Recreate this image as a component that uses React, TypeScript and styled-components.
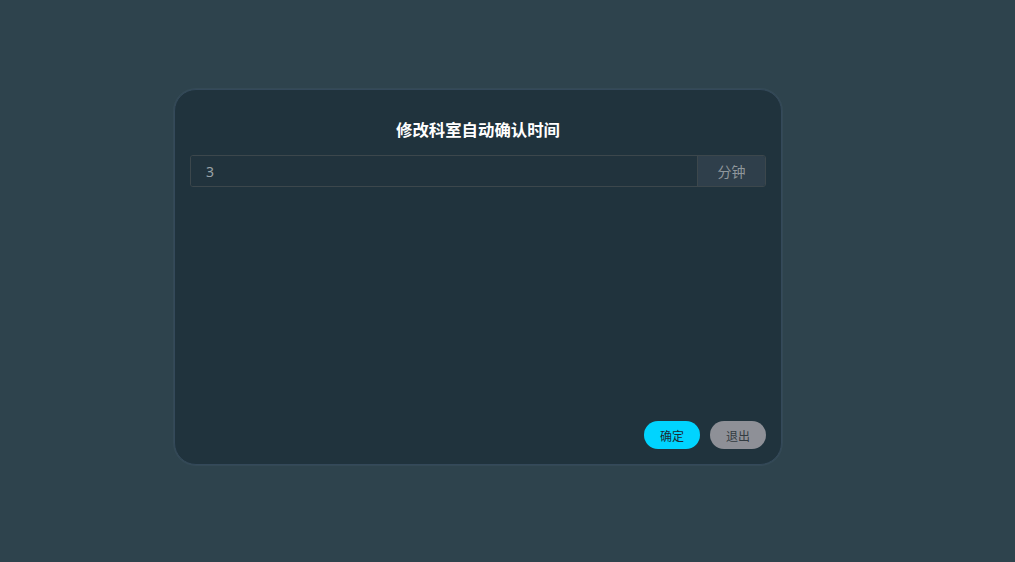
import React from "react";
import styled, { createGlobalStyle } from "styled-components";

const Global = createGlobalStyle`
  html, body { margin: 0; padding: 0; }
  body {
    width: 1015px;
    height: 562px;
    background: #2e434d;
    font-family: "Noto Sans CJK SC", "Noto Sans", sans-serif;
    overflow: hidden;
  }
`;

const Page = styled.div`
  width: 1015px;
  height: 562px;
  display: flex;
  justify-content: flex-start;
  align-items: flex-start;
  padding: 89px 0 0 174px;
  box-sizing: border-box;
`;

const Modal = styled.div`
  width: 608px;
  height: 376px;
  box-sizing: border-box;
  background: #20333d;
  border: 1px solid #34495a;
  box-shadow: 0 0 0 1px rgba(60, 82, 96, 0.45);
  border-radius: 22px;
  padding: 21px 15px 15px 15px;
  display: flex;
  flex-direction: column;
`;

const Title = styled.h3`
  margin: 0;
  height: 36px;
  line-height: 36px;
  text-align: center;
  color: #ffffff;
  font-size: 16.4px;
  font-weight: 700;
`;

const InputRow = styled.div`
  margin-top: 8px;
  display: flex;
  height: 32px;
  border: 1px solid #3c474c;
  border-radius: 3px;
  box-sizing: border-box;
  overflow: hidden;
`;

const Field = styled.input`
  flex: 1;
  min-width: 0;
  background: #21333d;
  border: none;
  outline: none;
  padding: 0 15px;
  color: #9aa3a8;
  font-size: 14px;
  font-family: "Noto Sans", "Noto Sans CJK SC", sans-serif;
`;

const Addon = styled.div`
  width: 67px;
  border-left: 1px solid #3c474c;
  background: #2f3f4b;
  color: #8f979c;
  font-size: 14px;
  display: flex;
  align-items: center;
  justify-content: center;
`;

const Spacer = styled.div`
  flex: 1;
`;

const Footer = styled.div`
  display: flex;
  justify-content: flex-end;
  gap: 10px;
`;

const Button = styled.button<{ $variant: "primary" | "secondary" }>`
  width: 56px;
  height: 28px;
  border: none;
  border-radius: 14px;
  padding: 0;
  font-size: 12px;
  font-family: "Noto Sans CJK SC", sans-serif;
  cursor: pointer;
  background: ${(p) => (p.$variant === "primary" ? "#00d4ff" : "#8e9097")};
  color: ${(p) => (p.$variant === "primary" ? "#1c2a33" : "#333c42")};
`;

export default function App() {
  return (
    <>
      <Global />
      <Page>
        <Modal>
          <Title>修改科室自动确认时间</Title>
          <InputRow>
            <Field defaultValue="3" />
            <Addon>分钟</Addon>
          </InputRow>
          <Spacer />
          <Footer>
            <Button $variant="primary">确定</Button>
            <Button $variant="secondary">退出</Button>
          </Footer>
        </Modal>
      </Page>
    </>
  );
}
